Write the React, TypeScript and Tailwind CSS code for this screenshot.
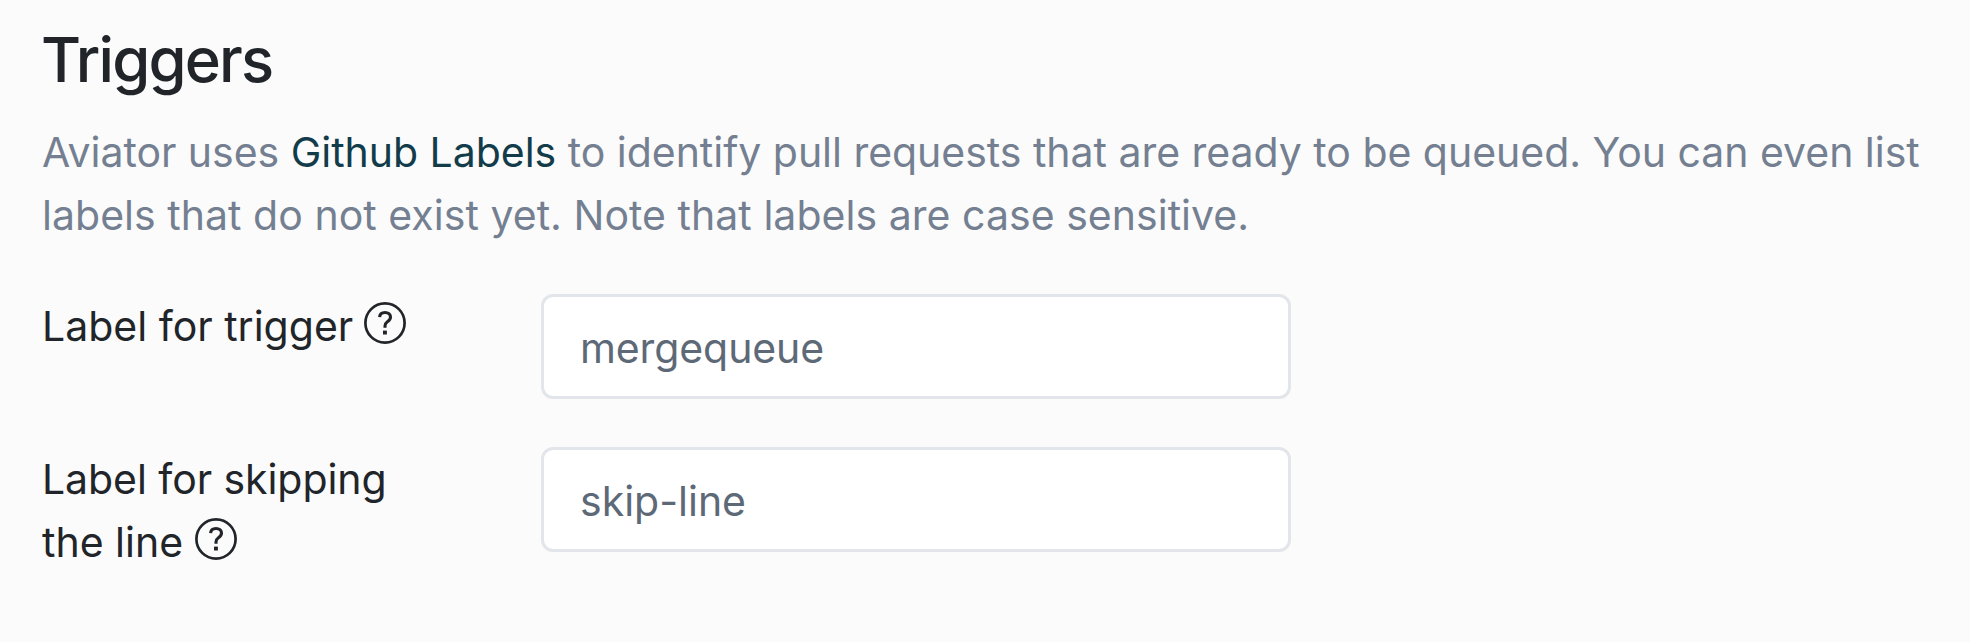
import React from "react";

function HelpIcon() {
  return (
    <svg className="mt-[7px] h-[42px] w-[42px] shrink-0" viewBox="0 0 42 42" fill="none" stroke="currentColor" aria-hidden="true">
      <circle cx="21" cy="21" r="19.6" strokeWidth="2.7" />
      <path d="M15.6 15.2C15.8 12.1 18 10.5 21 10.5C24.3 10.5 26.5 12.3 26.5 15C26.5 17.2 25.3 18.5 23.4 19.8C21.7 21 21 22.1 21 24V25.8" strokeWidth="3.1" />
      <rect x="19" y="28.6" width="3.9" height="3.9" fill="currentColor" stroke="none" />
    </svg>
  );
}

export default function App() {
  return (
    <main className="h-[642px] bg-[#fbfbfb] px-[42px] pt-[27px] font-['Inter',sans-serif] text-[41px] leading-[63px] text-[#212529]">
      <h1 className="-ml-px h-[94px] text-[61.5px] font-medium leading-[66px] tracking-[-1.85px]">Triggers</h1>
      <p className="whitespace-nowrap text-[#748091]">
        <span className="block tracking-[-0.025px]">Aviator uses <a className="text-[#123c4a]">Github Labels</a> to identify pull requests that are ready to be queued. You can even list</span>
        <span className="block tracking-[0.035px]">labels that do not exist yet. Note that labels are case sensitive.</span>
      </p>
      <div className="mt-[47px] flex h-[153px]">
        <label className="flex w-[499px] gap-[11px] pt-px">Label for trigger <HelpIcon /></label>
        <input className="h-[105px] w-[750px] rounded-[12px] border-3 border-[#e2e6ea] bg-white px-[36px] pt-[3px] tracking-[-0.1px] text-[#5d6977]" defaultValue="mergequeue" />
      </div>
      <div className="flex">
        <label className="w-[499px] pt-px">
          <span className="block tracking-[-0.07px]">Label for skipping</span>
          <span className="flex gap-[12px]">the line <HelpIcon /></span>
        </label>
        <input className="h-[105px] w-[750px] rounded-[12px] border-3 border-[#e2e6ea] bg-white px-[36px] pt-[3px] text-[#5d6977]" defaultValue="skip-line" />
      </div>
    </main>
  );
}
